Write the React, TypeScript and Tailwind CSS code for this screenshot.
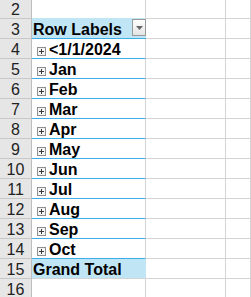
import React from "react";

// pivot rows under the header
const months: string[] = [
  "<1/1/2024",
  "Jan",
  "Feb",
  "Mar",
  "Apr",
  "May",
  "Jun",
  "Jul",
  "Aug",
  "Sep",
  "Oct",
];

const font = { fontFamily: '"Liberation Sans", Arial, sans-serif' };

const RowNum = ({ n, short }: { n: number; short?: boolean }) => (
  <div
    className={`${short ? "h-[19px]" : "h-[20px]"} bg-[#e6e6e6] border-r border-b border-r-[#bdbdbd] border-b-[#c8c8c8] text-center text-[16px] leading-[19px] text-[#222] ${short ? "" : "pt-px"}`}
  >
    {n}
  </div>
);

const Blank = ({ short }: { short?: boolean }) => (
  <div className={`${short ? "h-[19px]" : "h-[20px]"} border-r border-b border-[#d4d4d4]`} />
);

const PlusBox = () => (
  <svg width="9" height="9" viewBox="0 0 9 9" className="mt-[8px] ml-[5px] shrink-0">
    <rect x="0.5" y="0.5" width="8" height="8" fill="#f4f4f4" stroke="#8f8f8f" />
    <path d="M2 4.5h5M4.5 2v5" stroke="#3a3a3a" strokeWidth="1" />
  </svg>
);

export default function App() {
  return (
    <div className="w-[251px] h-[297px] overflow-hidden bg-white" style={font}>
      <div className="grid grid-cols-[32px_114px_80px_1fr]">
        {/* row 2 */}
        <RowNum n={2} short />
        <div className="h-[19px] border-r border-b border-r-[#d4d4d4] border-b-[#c0e6f5]" />
        <Blank short />
        <Blank short />

        {/* row 3 header */}
        <RowNum n={3} />
        <div className="h-[20px] bg-[#c0e6f5] border-b border-b-[#3eaee8] flex items-start">
          <span className="pl-px pt-px text-[16px] leading-[19px] font-bold text-black">Row Labels</span>
          <div className="ml-auto w-[14px] h-[17px] border border-[#9a9a9a] bg-gradient-to-b from-white to-[#e4e4e4] flex items-center justify-center">
            <svg width="7" height="4" viewBox="0 0 7 4">
              <path d="M0 0h7L3.5 4z" fill="#666" />
            </svg>
          </div>
        </div>
        <Blank />
        <Blank />

        {months.map((m, i) => (
          <React.Fragment key={m}>
            <RowNum n={i + 4} />
            <div className="h-[20px] border-b border-r border-b-[#3eaee8] border-r-[#d4d4d4] flex items-start">
              <PlusBox />
              <span className="ml-[3px] pt-px text-[16px] leading-[19px] font-bold text-black whitespace-nowrap">{m}</span>
            </div>
            <Blank />
            <Blank />
          </React.Fragment>
        ))}

        {/* row 15 total */}
        <RowNum n={15} />
        <div className="h-[20px] bg-[#c0e6f5] border-b border-b-[#d4d4d4]">
          <span className="pl-px pt-px block text-[16px] leading-[19px] font-bold text-black">Grand Total</span>
        </div>
        <Blank />
        <Blank />

        <RowNum n={16} />
        <Blank />
        <Blank />
        <Blank />
      </div>
    </div>
  );
}
